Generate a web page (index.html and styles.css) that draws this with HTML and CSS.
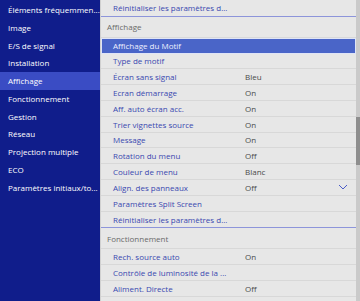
FILE: index.html
```html
<!DOCTYPE html>
<html lang="fr">
<head>
<meta charset="utf-8">
<link rel="stylesheet" href="styles.css">
</head>
<body>
<div class="screen">
  <nav class="nav">
    <div class="nav-item">Éléments fréquemmen...</div>
    <div class="nav-item">Image</div>
    <div class="nav-item">E/S de signal</div>
    <div class="nav-item">Installation</div>
    <div class="nav-item active">Affichage</div>
    <div class="nav-item">Fonctionnement</div>
    <div class="nav-item">Gestion</div>
    <div class="nav-item">Réseau</div>
    <div class="nav-item">Projection multiple</div>
    <div class="nav-item">ECO</div>
    <div class="nav-item">Paramètres initiaux/to...</div>
  </nav>
  <main class="main">
    <div class="list">
      <div class="section">
        <div class="row"><span class="label">Réinitialiser les paramètres d...</span></div>
      </div>
      <div class="section">
        <div class="header">Affichage</div>
        <div class="row selected"><span class="label">Affichage du Motif</span></div>
        <div class="row"><span class="label">Type de motif</span></div>
        <div class="row"><span class="label">Écran sans signal</span><span class="value">Bleu</span></div>
        <div class="row"><span class="label">Ecran démarrage</span><span class="value">On</span></div>
        <div class="row"><span class="label">Aff. auto écran acc.</span><span class="value">On</span></div>
        <div class="row"><span class="label">Trier vignettes source</span><span class="value">On</span></div>
        <div class="row"><span class="label">Message</span><span class="value">On</span></div>
        <div class="row"><span class="label">Rotation du menu</span><span class="value">Off</span></div>
        <div class="row"><span class="label">Couleur de menu</span><span class="value">Blanc</span></div>
        <div class="row"><span class="label">Align. des panneaux</span><span class="value">Off</span>
          <svg class="chev" viewBox="0 0 10 6" width="10" height="6"><path d="M1 1 L5 5 L9 1" fill="none" stroke="#4a5cc8" stroke-width="1"/></svg>
        </div>
        <div class="row"><span class="label">Paramètres Split Screen</span></div>
        <div class="row"><span class="label">Réinitialiser les paramètres d...</span></div>
      </div>
      <div class="section">
        <div class="header">Fonctionnement</div>
        <div class="row"><span class="label">Rech. source auto</span><span class="value">On</span></div>
        <div class="row"><span class="label">Contrôle de luminosité de la ...</span></div>
        <div class="row"><span class="label">Aliment. Directe</span><span class="value">Off</span></div>
        <div class="row"><span class="label">Activation rapide</span><span class="value">Off</span>
          <svg class="chev" viewBox="0 0 10 6" width="10" height="6"><path d="M1 1 L5 5 L9 1" fill="none" stroke="#4a5cc8" stroke-width="1"/></svg>
        </div>
      </div>
    </div>
    <div class="scrollbar"><div class="thumb"></div></div>
  </main>
</div>
</body>
</html>
```
FILE: styles.css
```css
html, body {
  margin: 0;
  padding: 0;
}
body {
  width: 360px;
  height: 301px;
  overflow: hidden;
  font-family: "Open Sans", "Noto Sans", sans-serif;
  font-size: 8px;
}
.screen {
  display: flex;
  width: 360px;
  height: 301px;
  overflow: hidden;
}
.nav {
  width: 100px;
  flex: none;
  background: #101d8b;
  padding-top: 1px;
  box-sizing: border-box;
}
.nav-item {
  height: 17.75px;
  line-height: 17.75px;
  padding-left: 8px;
  color: #ffffff;
  white-space: nowrap;
}
.nav-item.active {
  background: #3a4cc4;
}
.main {
  flex: 1;
  display: flex;
  background: #e7e7e7;
  border-left: 1px solid #d0d0d0;
  overflow: hidden;
}
.list {
  flex: 1;
  overflow: hidden;
}
.section {
  border-bottom: 1px solid #8d95da;
}
.section:last-child {
  border-bottom: none;
}
.header {
  height: 21px;
  box-sizing: border-box;
  display: flex;
  align-items: center;
  padding-left: 6px;
  color: #6a6a6a;
  border-bottom: 1px solid #d8d8d8;
}
.row {
  height: 15.8px;
  box-sizing: border-box;
  display: flex;
  align-items: center;
  padding-left: 12px;
  border-bottom: 1px solid #d8d8d8;
  white-space: nowrap;
}
.section .row:last-child {
  border-bottom: none;
}
.label {
  width: 132px;
  flex: none;
  color: #3a48b0;
}
.value {
  color: #4a4a4a;
}
.chev {
  margin-left: auto;
  margin-right: 8px;
}
.row.selected {
  background: #4a65c8;
  border: 1px solid #dfe4f6;
  padding-left: 11px;
}
.row.selected .label {
  color: #eef0ff;
}
.scrollbar {
  width: 4px;
  flex: none;
  background: #cacaca;
  padding-top: 117px;
  box-sizing: border-box;
}
.thumb {
  height: 48px;
  background: #8e8e8e;
}
```
